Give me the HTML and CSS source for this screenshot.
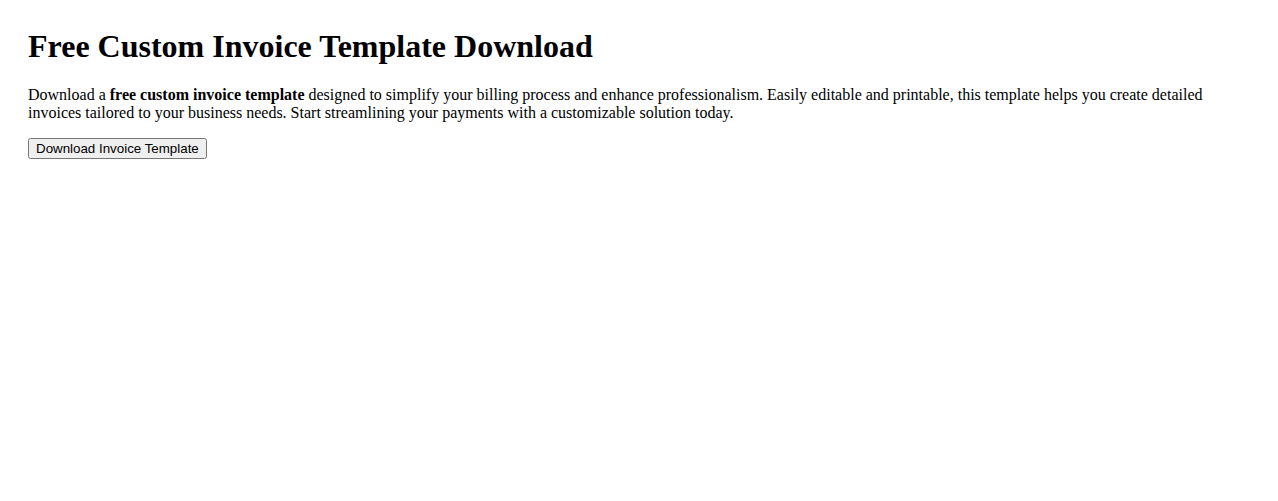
FILE: index.html
```html
<!DOCTYPE html>
<html lang="en">
<head>
<meta charset="utf-8">
<title>Free Custom Invoice Template Download</title>
<link rel="stylesheet" href="styles.css">
</head>
<body>
<main class="page">
<h1 class="title">Free Custom Invoice Template Download</h1>
<p class="intro">Download a <strong>free custom invoice template</strong> designed to simplify your billing process and enhance professionalism. Easily editable and printable, this template helps you create detailed invoices tailored to your business needs. Start streamlining your payments with a customizable solution today.</p>
<button class="download" type="button">Download Invoice Template</button>
</main>
</body>
</html>
```
FILE: styles.css
```css
body {
  margin: 8px;
  background: #fff;
  color: #000;
  font-family: "Liberation Serif", "Times New Roman", serif;
}
.page {
  padding: 20px;
}
.title {
  font-size: 32px;
  font-weight: bold;
  margin: 0 0 21.44px;
}
.intro {
  font-size: 16px;
  margin: 0 0 16px;
}
.download {
  font-family: "Liberation Sans", Arial, sans-serif;
  font-size: 13.333px;
}
```
